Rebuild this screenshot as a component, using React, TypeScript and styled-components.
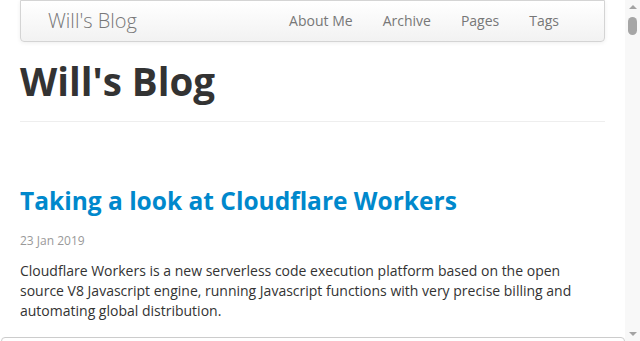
import styled, { createGlobalStyle } from "styled-components";

const GlobalStyle = createGlobalStyle`
  html, body {
    margin: 0;
    padding: 0;
    background: #ffffff;
  }
  body {
    font-family: "Open Sans", "Liberation Sans", sans-serif;
    font-size: 14px;
    line-height: 20px;
    color: #333333;
  }
`;

const Page = styled.div`
  padding: 0 35px 0 20px;
`;

const Navbar = styled.div`
  display: flex;
  align-items: center;
  justify-content: space-between;
  height: 40px;
  padding: 0 30px 0 27px;
  background: linear-gradient(to bottom, #ffffff, #f2f2f2);
  border: 1px solid #d4d4d4;
  border-radius: 0 0 4px 4px;
  box-shadow: 0 1px 4px rgba(0, 0, 0, 0.065);
`;

const Brand = styled.a`
  font-size: 20px;
  font-weight: 300;
  color: #777777;
  text-decoration: none;
`;

const Nav = styled.ul`
  display: flex;
  list-style: none;
  margin: 0;
  padding: 0;
`;

const NavLink = styled.a`
  display: block;
  padding: 10px 15px;
  color: #777777;
  text-decoration: none;
`;

const Header = styled.div`
  padding-bottom: 20px;
  margin: 19px 0 0;
  border-bottom: 1px solid #eeeeee;
`;

const SiteTitle = styled.h1`
  margin: 13px 0 0;
  font-size: 38.5px;
  line-height: 40px;
  font-weight: 700;
  color: #333333;
`;

const Post = styled.article`
  margin-top: 59px;
`;

const PostTitle = styled.h2`
  margin: 0;
  font-size: 24.5px;
  line-height: 40px;
  font-weight: 700;
  a {
    color: #0088cc;
    text-decoration: none;
  }
`;

const PostDate = styled.div`
  margin-top: 10px;
  font-size: 12px;
  color: #999999;
`;

const Excerpt = styled.p`
  margin: 10px 0 0;
`;

const Snippet = styled.pre`
  margin: 16px -20px 0 -19px;
  height: 200px;
  border: 1px solid #cccccc;
  border-radius: 4px;
  background: #ffffff;
`;

/* window scrollbar, drawn over the right edge of the page */
const ScrollRail = styled.div`
  position: fixed;
  top: 0;
  right: 0;
  bottom: 0;
  width: 15px;
  display: flex;
  flex-direction: column;
  align-items: center;
  background: #f8f8f8;
`;

const Arrow = styled.div<{ $down?: boolean }>`
  width: 0;
  height: 0;
  margin: ${(p) => (p.$down ? "auto 0 5px" : "5px 0 0")};
  border-left: 4px solid transparent;
  border-right: 4px solid transparent;
  ${(p) =>
    p.$down
      ? "border-top: 4px solid #a3a3a3;"
      : "border-bottom: 4px solid #a3a3a3;"}
`;

const Thumb = styled.div`
  width: 9px;
  height: 18px;
  margin-top: 8px;
  border-radius: 5px;
  background: #a6a6a6;
`;

const posts = [
  {
    title: "Taking a look at Cloudflare Workers",
    date: "23 Jan 2019",
    excerpt:
      "Cloudflare Workers is a new serverless code execution platform based on the open source V8 Javascript engine, running Javascript functions with very precise billing and automating global distribution.",
  },
];

export default function App() {
  return (
    <>
      <GlobalStyle />
      <Page>
        <Navbar>
          <Brand href="#">Will's Blog</Brand>
          <Nav>
            {["About Me", "Archive", "Pages", "Tags"].map((item) => (
              <li key={item}>
                <NavLink href="#">{item}</NavLink>
              </li>
            ))}
          </Nav>
        </Navbar>
        <Header>
          <SiteTitle>Will's Blog</SiteTitle>
        </Header>
        {posts.map((post) => (
          <Post key={post.title}>
            <PostTitle>
              <a href="#">{post.title}</a>
            </PostTitle>
            <PostDate>{post.date}</PostDate>
            <Excerpt>{post.excerpt}</Excerpt>
            <Snippet />
          </Post>
        ))}
      </Page>
      <ScrollRail>
        <Arrow />
        <Thumb />
        <Arrow $down />
      </ScrollRail>
    </>
  );
}
